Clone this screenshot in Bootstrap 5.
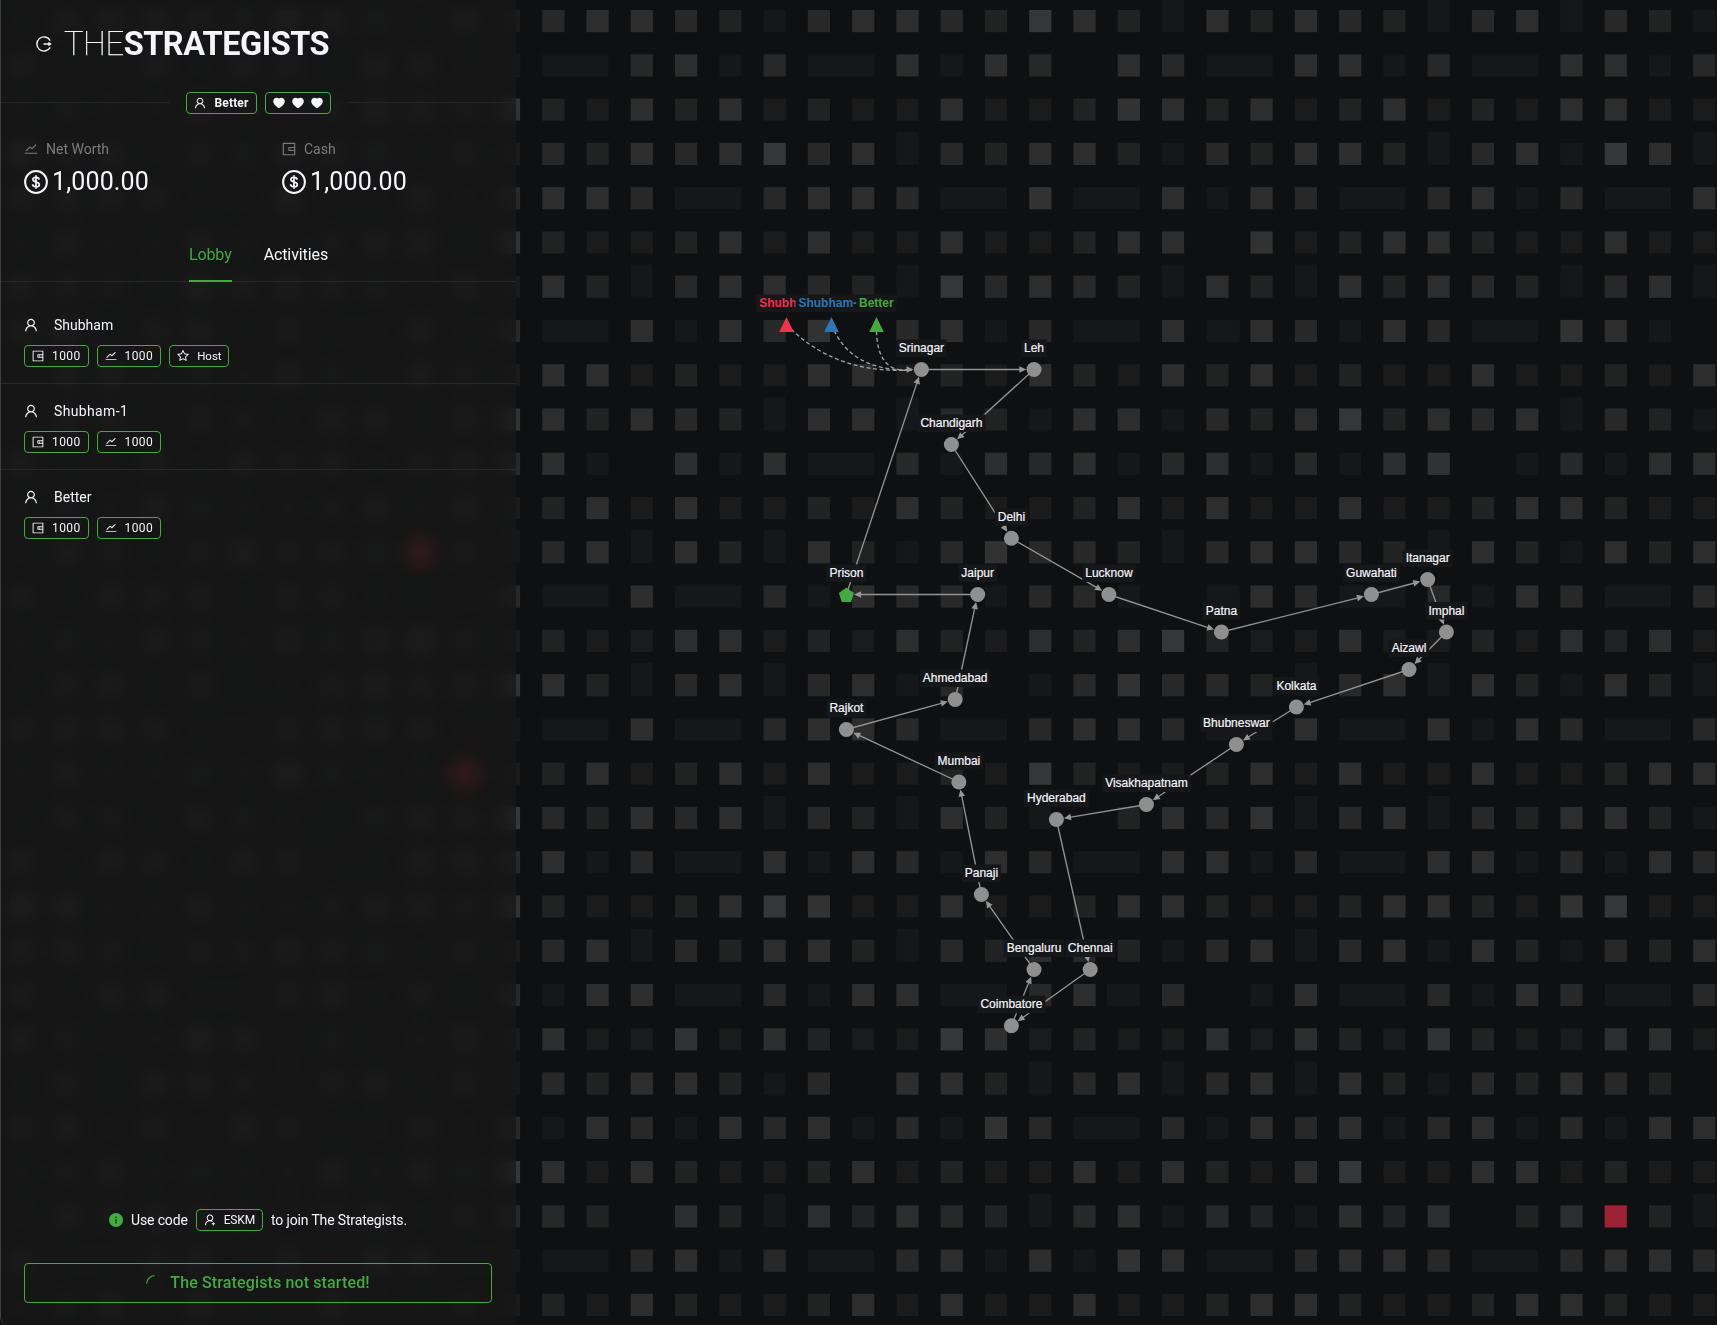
<!DOCTYPE html>
<html lang="en" data-bs-theme="dark">
<head>
<meta charset="utf-8">
<meta name="viewport" content="width=device-width, initial-scale=1">
<title>The Strategists</title>
<link href="https://cdn.jsdelivr.net/npm/bootstrap@5.3.0/dist/css/bootstrap.min.css" rel="stylesheet">
<style>
:root{--ink:#f5f5fa;--brand:#43a940}
html,body{height:100%}
body{background:#0f1011;color:var(--ink);font-family:Roboto,"Liberation Sans",sans-serif;font-size:14px;line-height:22px;overflow:hidden}
.backdrop,.city-map{position:absolute;inset:0;width:1717px;height:1325px}
.city-map text{font:12px "Liberation Sans",Arial,sans-serif;text-anchor:middle;fill:#f5f5fa;stroke:#f5f5fa;stroke-width:.2}
.city-map .pawn-name{font-weight:700;text-anchor:start;stroke:none}
.side-panel{width:516px;height:1325px;background:rgba(24,24,24,.68);backdrop-filter:blur(10px);border-left:1px solid #3d3e3f;border-bottom-left-radius:8px;z-index:2}
.ico{width:14px;height:14px;fill:currentColor;flex:none}
.ico-lg{width:24px;height:24px}
.ico-logo{width:16px;height:16px}
.logo{height:44px;margin:22px 0 0 35px;font-size:32.5px;line-height:44px}
.logo-thin{font-weight:100;margin-left:12px;letter-spacing:-.35px;-webkit-text-stroke:.25px var(--ink)}
.logo-bold{font-weight:700;letter-spacing:-.5px}
.identity{margin-top:26px}
.rule{height:1px;background:#222323;margin-bottom:2px}
.pill{height:22px;border:1px solid var(--brand);border-radius:4px;padding:0 7px;font-size:12px;line-height:20px}
.pill .ico{width:12px;height:12px}
.pill-num{letter-spacing:.4px;padding-right:7px}
.pill-host{font-size:11.5px;padding-right:6px}
.pill-name{letter-spacing:.15px}
.hearts{gap:7px}
.stats{padding:24px 0 0 23px}
.stat-label{color:#7b7c7d}
.stat-value{font-size:25px;line-height:32px;margin-top:6px;letter-spacing:.15px}
.tab-strip{border-bottom:1px solid #262727;height:46px;gap:32px;font-size:16px;margin-top:38px}
.tab-strip .nav-link{padding:7px 0 0;height:46px;color:var(--ink);line-height:24px;letter-spacing:-.1px}
.tab-strip .nav-link.active{color:var(--brand);border-bottom:2px solid var(--brand)}
.players{padding-top:16px}
.player{height:86px;padding:16px 23px;border-bottom:1px solid #262727}
.player:last-child{border-bottom:0}
.tags{margin-top:9px}
.wide-name{letter-spacing:.35px}
.panel-foot{padding:0 24px 22px 23px}
.join-text{letter-spacing:-.15px}
.start-btn{height:40px;border:1px solid var(--brand);border-radius:4px;color:var(--brand);font-size:16px;font-weight:500;background:none;margin-top:32px;letter-spacing:.13px;padding-top:1px}
</style>
</head>
<body>
<svg width="0" height="0" class="position-absolute" aria-hidden="true">
<symbol id="i-user" viewBox="64 64 896 896"><path d="M858.5 763.6a374 374 0 00-80.6-119.5 375.63 375.63 0 00-119.5-80.6c-.4-.2-.8-.3-1.2-.5C719.5 518 760 444.7 760 362c0-137-111-248-248-248S264 225 264 362c0 82.7 40.5 156 102.8 201.1-.4.2-.8.3-1.2.5-44.8 18.9-85 46-119.5 80.6a375.63 375.63 0 00-80.6 119.5A371.7 371.7 0 00136 901.8a8 8 0 008 8.2h60c4.4 0 7.9-3.5 8-7.8 2-77.2 33-149.5 87.8-204.3 56.7-56.7 132-87.9 212.2-87.9s155.5 31.2 212.2 87.9C779 752.7 810 825 812 902.2c.1 4.4 3.6 7.8 8 7.8h60a8 8 0 008-8.2c-1-47.8-10.9-94.3-29.5-138.2zM512 534c-45.9 0-89.1-17.9-121.6-50.4S340 407.9 340 362c0-45.9 17.9-89.1 50.4-121.6S466.1 190 512 190s89.1 17.9 121.6 50.4S684 316.1 684 362c0 45.9-17.9 89.1-50.4 121.6S557.9 534 512 534z"/></symbol>
<symbol id="i-useradd" viewBox="64 64 896 896"><path d="M678.3 642.4c24.2-13 51.9-20.4 81.4-20.4h.1c3 0 4.4-3.6 2.2-5.6a371.67 371.67 0 00-103.7-65.8c-.4-.2-.8-.3-1.2-.5C719.2 505 759.6 431.7 759.6 349c0-137-110.8-248-247.5-248S264.7 212 264.7 349c0 82.7 40.4 156 102.6 201.1-.4.2-.8.3-1.2.5-44.7 18.9-84.8 46-119.3 80.6a373.42 373.42 0 00-80.4 119.5A373.6 373.6 0 00137 888.8a8 8 0 008 8.2h59.9c4.3 0 7.9-3.5 8-7.8 2-77.2 32.9-149.5 87.6-204.3C357 628.2 432.2 597 512.2 597c56.7 0 111.1 15.7 158 45.1a8.1 8.1 0 008.1.3zM512.2 521c-45.8 0-88.9-17.9-121.4-50.4A171.2 171.2 0 01340.5 349c0-45.9 17.9-89.1 50.3-121.6S466.3 177 512.2 177s88.9 17.9 121.4 50.4A171.2 171.2 0 01683.9 349c0 45.9-17.9 89.1-50.3 121.6C601.1 503.1 558 521 512.2 521zM880 759h-84v-84h-72v84h-84v72h84v84h72v-84h84z"/></symbol>
<symbol id="i-wallet" viewBox="64 64 896 896"><path d="M880 112H144c-17.7 0-32 14.3-32 32v736c0 17.7 14.3 32 32 32h736c17.7 0 32-14.3 32-32V144c0-17.7-14.3-32-32-32zm-40 464H528V448h312v128zm0 264H184V184h656v200H496c-17.7 0-32 14.3-32 32v192c0 17.7 14.3 32 32 32h344v200zM580 512a40 40 0 1080 0 40 40 0 10-80 0z"/></symbol>
<symbol id="i-stock" viewBox="64 64 896 896"><path d="M904 747H120c-4.4 0-8 3.6-8 8v56c0 4.4 3.6 8 8 8h784c4.4 0 8-3.6 8-8v-56c0-4.4-3.6-8-8-8zM165.7 621.8l39.7 39.5c3.1 3.1 8.2 3.1 11.3 0l234.7-233.9 97.6 97.3a32.11 32.11 0 0045.2 0l264.2-263.2c3.1-3.1 3.1-8.2 0-11.3l-39.7-39.6a8.03 8.03 0 00-11.3 0l-235.7 235-97.7-97.3a32.11 32.11 0 00-45.2 0L165.7 610.5a7.94 7.94 0 000 11.3z"/></symbol>
<symbol id="i-star" viewBox="64 64 896 896"><path d="M908.1 353.1l-253.9-36.9L540.7 86.1c-3.1-6.3-8.2-11.4-14.5-14.5-15.8-7.8-35-1.3-42.9 14.5L369.8 316.2l-253.9 36.9c-7 1-13.4 4.3-18.3 9.3a32.05 32.05 0 00.6 45.3l183.7 179.1-43.4 252.9a31.95 31.95 0 0046.4 33.7L512 754l227.1 119.4c6.2 3.3 13.4 4.4 20.3 3.2 17.4-3 29.1-19.5 26.1-36.9l-43.4-252.9 183.7-179.1c5-4.9 8.3-11.3 9.3-18.3 2.7-17.5-9.5-33.7-27-36.3zM664.8 561.6l36.1 210.3L512 672.7 323.1 772l36.1-210.3-152.8-149L417.6 382 512 190.7 606.4 382l211.2 30.7-152.8 148.9z"/></symbol>
<symbol id="i-heart" viewBox="64 64 896 896"><path d="M923 283.6a260.04 260.04 0 00-56.9-82.8 264.4 264.4 0 00-84-55.5A265.34 265.34 0 00679.7 125c-49.3 0-97.4 13.5-139.2 39-10 6.1-19.5 12.8-28.5 20.1-9-7.3-18.5-14-28.5-20.1-41.8-25.5-89.9-39-139.2-39-35.5 0-69.9 6.8-102.4 20.3-31.4 13-59.7 31.7-84 55.5a258.44 258.44 0 00-56.9 82.8c-13.9 32.3-21 66.6-21 101.9 0 33.3 6.8 68 20.3 103.3 11.3 29.5 27.5 60.1 48.2 91 32.8 48.9 77.9 99.9 133.9 151.6 92.8 85.7 184.7 144.9 188.6 147.3l23.7 15.2c10.5 6.7 24 6.7 34.5 0l23.7-15.2c3.9-2.5 95.7-61.6 188.6-147.3 56-51.7 101.1-102.7 133.9-151.6 20.7-30.9 37-61.5 48.2-91 13.5-35.3 20.3-70 20.3-103.3.1-35.3-7-69.6-20.9-101.9z"/></symbol>
<symbol id="i-info" viewBox="64 64 896 896"><path fill-rule="evenodd" d="M512 64C264.6 64 64 264.6 64 512s200.600 448 448 448 448-200.600 448-448S759.400 64 512 64zm32 664h-64V448h64v280zm-32-344a48 48 0 010-96 48 48 0 010 96z"/></symbol>
<symbol id="i-coin" viewBox="0 0 24 24"><circle cx="12" cy="12" r="10.900" fill="none" stroke="currentColor" stroke-width="2"/><path d="M15.200 9.600C15 8.100 13.800 7.300 12 7.300s-3.100.9-3.100 2.300c0 3.200 6.400 1.500 6.400 4.800 0 1.500-1.400 2.400-3.300 2.400-2 0-3.300-.9-3.400-2.500M12 5.200v13.600" fill="none" stroke="currentColor" stroke-width="1.700"/></symbol>
<symbol id="i-logo" viewBox="0 0 16 16"><path d="M14.200 4.600A7.100 7.100 0 1 0 14.200 11.400M7.500 8h6" fill="none" stroke="currentColor" stroke-width="1.400"/><path d="M12.300 5.800L15.900 8l-3.600 2.200z"/></symbol>
</svg>

<svg class="backdrop" id="backdrop" viewBox="0 0 1717 1325"></svg>
<svg class="city-map" id="cityMap" viewBox="0 0 1717 1325"></svg>

<aside class="side-panel position-relative d-flex flex-column">
  <header class="logo d-flex align-items-center">
    <svg class="ico ico-logo"><use href="#i-logo"/></svg>
    <span class="logo-thin">THE</span><span class="logo-bold">STRATEGISTS</span>
  </header>

  <div class="identity d-flex align-items-center">
    <div class="rule flex-fill"></div>
    <div class="d-flex gap-2 px-3">
      <span class="pill pill-name d-flex align-items-center fw-bold"><svg class="ico me-2"><use href="#i-user"/></svg>Better</span>
      <span class="pill hearts d-flex align-items-center"><svg class="ico"><use href="#i-heart"/></svg><svg class="ico"><use href="#i-heart"/></svg><svg class="ico"><use href="#i-heart"/></svg></span>
    </div>
    <div class="rule flex-fill"></div>
  </div>

  <div class="row g-0 stats">
    <div class="col-6">
      <div class="stat-label d-flex align-items-center gap-2"><svg class="ico"><use href="#i-stock"/></svg>Net Worth</div>
      <div class="stat-value d-flex align-items-center gap-1"><svg class="ico ico-lg"><use href="#i-coin"/></svg>1,000.00</div>
    </div>
    <div class="col-6 ps-2">
      <div class="ms-1 stat-label d-flex align-items-center gap-2"><svg class="ico"><use href="#i-wallet"/></svg>Cash</div>
      <div class="ms-1 stat-value d-flex align-items-center gap-1"><svg class="ico ico-lg"><use href="#i-coin"/></svg>1,000.00</div>
    </div>
  </div>

  <nav class="nav tab-strip justify-content-center">
    <a class="nav-link active" href="#">Lobby</a>
    <a class="nav-link" href="#">Activities</a>
  </nav>

  <div class="players flex-fill">
    <div class="player">
      <div class="d-flex align-items-center gap-3"><svg class="ico"><use href="#i-user"/></svg>Shubham</div>
      <div class="tags d-flex gap-2">
        <span class="pill pill-num d-flex align-items-center gap-2"><svg class="ico"><use href="#i-wallet"/></svg>1000</span>
        <span class="pill pill-num d-flex align-items-center gap-2"><svg class="ico"><use href="#i-stock"/></svg>1000</span>
        <span class="pill pill-host d-flex align-items-center gap-2"><svg class="ico"><use href="#i-star"/></svg>Host</span>
      </div>
    </div>
    <div class="player">
      <div class="wide-name d-flex align-items-center gap-3"><svg class="ico"><use href="#i-user"/></svg>Shubham-1</div>
      <div class="tags d-flex gap-2">
        <span class="pill pill-num d-flex align-items-center gap-2"><svg class="ico"><use href="#i-wallet"/></svg>1000</span>
        <span class="pill pill-num d-flex align-items-center gap-2"><svg class="ico"><use href="#i-stock"/></svg>1000</span>
      </div>
    </div>
    <div class="player">
      <div class="d-flex align-items-center gap-3"><svg class="ico"><use href="#i-user"/></svg>Better</div>
      <div class="tags d-flex gap-2">
        <span class="pill pill-num d-flex align-items-center gap-2"><svg class="ico"><use href="#i-wallet"/></svg>1000</span>
        <span class="pill pill-num d-flex align-items-center gap-2"><svg class="ico"><use href="#i-stock"/></svg>1000</span>
      </div>
    </div>
  </div>

  <footer class="panel-foot">
    <div class="join-text d-flex align-items-center justify-content-center gap-2">
      <svg class="ico" style="color:var(--brand)"><use href="#i-info"/></svg><span>Use code</span>
      <span class="pill d-flex align-items-center gap-2"><svg class="ico"><use href="#i-useradd"/></svg>ESKM</span>
      <span>to join The Strategists.</span>
    </div>
    <button class="start-btn w-100 d-flex align-items-center justify-content-center">
      <svg width="16" height="16" viewBox="0 0 16 16" class="me-2" fill="none" stroke="currentColor" stroke-width="1.200"><path d="M.7 8.500A8 8 0 0 1 8.500.700"/></svg>The Strategists not started!
    </button>
  </footer>
</aside>

<script>
// Tile map: one string per row, first character sits half under the side panel.
const rows = [
'acddcbgcddcbfdbvdbdcbvcdvcbg','dw_cdgcw_dgdc.dcw_ddgcw_ddgc','ebadbdabaadaabedbdabdabaddaa','acbdcdfcdvcbddbgcbddbvcdgfdv',
'cddcw_cddcw_ew_dgdcw_cdgcw_d','ebaabdadaadaabdd.eabddbaadaa','adbvcddcbvfcdcbvdbvdbdcbvcdv','cw_dgdce.cdgcw_dhdcgdcw_edg.',
'addabaaddabadbadbdabaadaabad','edbdcbvddvcbgddgcbdfbdcdvcbg','cdg.dgdw_cgdcdgcdgcgde.gcgdd','abdadaabadbaabdadaadaabddbaa',
'vcdvdbvdbgceccbvcddcbvdbgdbd','cw_dw_cgdccgccg.hdcw_cgdcw_c','abaaddabadbadbdfbaadaabadbda','edbvcdvcdgc.gceccbvcdvdbgdbv',
'cw_dw_cddcw_cddcw_dw_dgdcw_c','abdabdadaabafbaabdadaadaabdd','fcbdcdvcbvdbg.bdcevcdvcbddbg','cdgcw_dgdcgdcw_ddgcw_ddgcgdc',
'ebaabdfeaadaabddbaabddbaefaa','acdvcbddbvcbdcbgcdvcdgdbgcbd','cgddw_cgddw_cdHc.gdw_cgdcw_c','adaaeadbaafdabaadadbaebaadda',
'vcbddbgc.ddbvcdvcdvdbgcbdcb.','cgdcgdcdgcgecw_cgdcdgcdgcgdd','fdadbaabdabaadadbadfaaddabaa','ccb.dbvdbdcbvcdgcbgdbd.bdrbv',
'dw_cdgcw_cdgdgedw_cddcw_cddc','abadbaabdadaadaabddbaabddbaa'];
const fill = {a:'#1a1b1a',b:'#212322',c:'#282828',d:'#2d2d2d',e:'#323232',f:'#353638',g:'#161719',v:'#161719',w:'#161719',h:'#161719',H:'#161719',r:'#9e2236'};
const P = 44.27, S = 22.2;
let out = '';
const tile = (ch, c, r) => {
  if (!fill[ch]) return;
  let x = 542.2 + P * c, y = 10 + P * r, w = S, h = S;
  if (ch === 'w') w = 66.4;
  if (ch === 'h') w = 33.2;
  if (ch === 'H') { x -= 11; w = 33.2; }
  if (ch === 'v') { y -= 11.1; h = 33.2; }
  out += `<rect x="${x.toFixed(1)}" y="${y.toFixed(1)}" width="${w}" height="${h}" fill="${fill[ch]}"/>`;
};
rows.forEach((row, r) => {
  [...row].forEach((ch, i) => tile(ch, i - 1, r));
  for (let k = 2; k <= 13; k++) {
    const red = (r === 12 && k === 3) || (r === 17 && k === 2);
    tile(red ? 'r' : row[18 - k], -k, r);
  }
});
document.getElementById('backdrop').innerHTML = out;

// The route visits the cities in this order and closes at Srinagar.
const cities = {
  Srinagar:[921.4,369.5],Leh:[1034,369.5],Chandigarh:[951.4,444.5],Delhi:[1011.4,538.3],Lucknow:[1108.9,594.5],Patna:[1221.4,632],
  Guwahati:[1371.4,594.5],Itanagar:[1427.7,579.5],Imphal:[1446.4,632],Aizawl:[1409,669.5],Kolkata:[1296.4,707],Bhubneswar:[1236.4,744.5],
  Visakhapatnam:[1146.4,804.5],Hyderabad:[1056.4,819.5],Chennai:[1090.2,969.5],Coimbatore:[1011.4,1025.7],Bengaluru:[1034,969.5],
  Panaji:[981.4,894.5],Mumbai:[958.9,782],Rajkot:[846.4,729.5],Ahmedabad:[955.2,699.5],Jaipur:[977.7,594.5],Prison:[846.4,594.5]};
// Pawn: visible name, x, colour, curve control point, text start, label box
const pawns = [
  ['Shubh',786.5,'#ec3350',[835,375],759.2,[756,40]],
  ['Shubham-',831.5,'#2e75b6',[850,372],798.4,[795.5,62]],
  ['Better',876.5,'#43a940',[875,375],859,[856.3,40.5]]];
const head = (x, y, a) => `<path d="M0 0L-7 -3.3L-7 3.3Z" fill="#979797" transform="translate(${x} ${y}) rotate(${a * 180 / Math.PI})"/>`;
const names = Object.keys(cities);
let g = '';
names.forEach((n, i) => {
  const [x1, y1] = cities[n], [x2, y2] = cities[names[(i + 1) % names.length]];
  const a = Math.atan2(y2 - y1, x2 - x1), tx = x2 - 7.7 * Math.cos(a), ty = y2 - 7.7 * Math.sin(a);
  g += `<path d="M${x1} ${y1}L${tx - 4 * Math.cos(a)} ${ty - 4 * Math.sin(a)}" stroke="#929292" stroke-width="1.35"/>` + head(tx, ty, a);
});
pawns.forEach(([n, x, c, q]) => {
  g += `<path d="M${x} 324.5Q${q} 912 369.8" fill="none" stroke="#a0a0a0" stroke-width="1.35" stroke-dasharray="4 2.6"/>`;
});
g += head(913.5, 369.5, 0);
const ctx = document.createElement('canvas').getContext('2d');
ctx.font = '12px "Liberation Sans"';
names.forEach(n => {
  const [x, y] = cities[n];
  g += n === 'Prison'
    ? `<path d="M${x} ${y - 7}L${x + 7.5} ${y - 1.5}L${x + 4.7} ${y + 7.5}H${x - 4.7}L${x - 7.5} ${y - 1.5}Z" fill="#43a940"/>`
    : `<circle cx="${x}" cy="${y}" r="7.5" fill="#8f8f8f"/>`;
});
names.forEach(n => {
  const [x, y] = cities[n], w = ctx.measureText(n).width + 6;
  g += `<rect x="${x - w / 2}" y="${y - 30}" width="${w}" height="17.5" fill="#161719"/><text x="${x}" y="${y - 17.3}">${n}</text>`;
});
pawns.forEach(([n, x, c, q, tx, [bx, bw]]) => {
  g += `<path d="M${x} 317L${x + 7.3} 332H${x - 7.3}Z" fill="${c}"/><rect x="${bx}" y="294.5" width="${bw}" height="17.5" fill="#161719"/>`
    + `<text x="${tx}" y="307.2" class="pawn-name" style="fill:${c}">${n}</text>`;
});
document.getElementById('cityMap').innerHTML = g;
</script>
<script src="https://cdn.jsdelivr.net/npm/bootstrap@5.3.0/dist/js/bootstrap.bundle.min.js"></script>
</body>
</html>
